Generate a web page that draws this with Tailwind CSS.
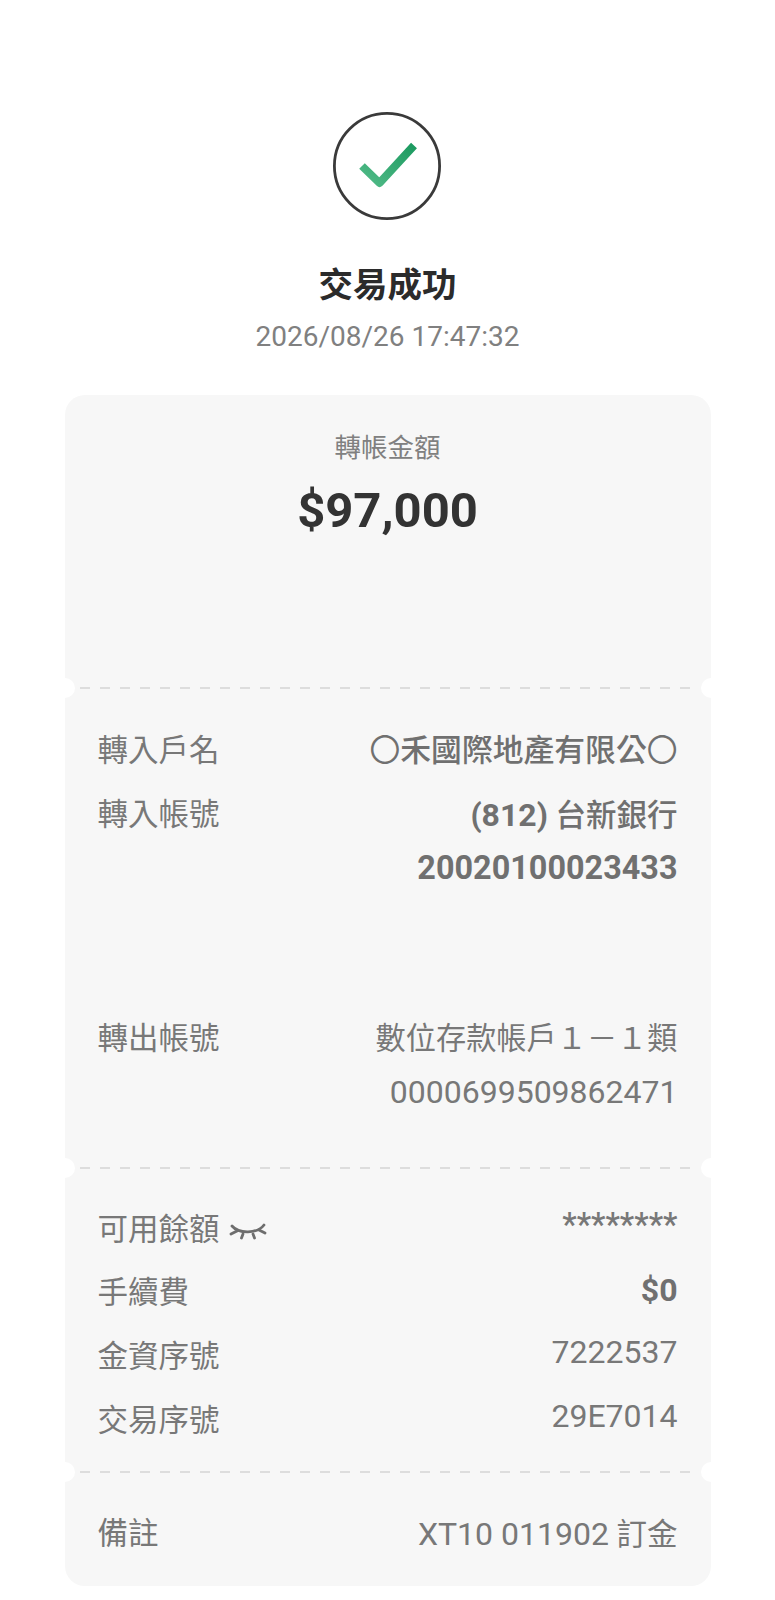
<!DOCTYPE html>
<html lang="zh-Hant">
<head>
    <meta charset="UTF-8">
    <meta name="viewport" content="width=device-width, initial-scale=1.0">
    <title>交易成功</title>
    <script src="https://cdn.jsdelivr.net/npm/@tailwindcss/browser@4"></script>
</head>
<body class="bg-white font-['Roboto','Noto_Sans_CJK_TC',sans-serif]">
    <div class="w-[775px] h-[1600px] overflow-hidden flex flex-col items-center pt-[112px]">
        <!-- success header -->
        <svg class="w-[108px] h-[108px] block -ml-[2px]" viewBox="0 0 108 108" fill="none">
            <defs>
                <linearGradient id="tick" x1="0" y1="1" x2="1" y2="0">
                    <stop offset="0" stop-color="#52bb88"/>
                    <stop offset="1" stop-color="#1c9a60"/>
                </linearGradient>
            </defs>
            <circle cx="54" cy="54" r="52.6" stroke="#3a3a3a" stroke-width="2.800"/>
            <path d="M29 54L46.500 71L81 33.500" stroke="url(#tick)" stroke-width="8" stroke-linejoin="round"/>
        </svg>
        <h1 class="mt-[40px] text-[34.500px] leading-[50px] font-bold text-[#2b2b2b]">交易成功</h1>
        <p class="mt-[2px] text-[28px] leading-[50px] text-[#808080]">2026/08/26 17:47:32</p>

        <!-- receipt card -->
        <div class="mt-[33px] w-[646px] rounded-[20px] overflow-hidden bg-[#f7f7f7] text-[30.500px] text-[#787878]">
            <section class="h-[293px] pt-[35px] text-center">
                <p class="text-[26.500px] leading-[36px] text-[#808080]">轉帳金額</p>
                <p class="mt-[17px] text-[49px] leading-[56px] font-bold text-[#333333]">$97,000</p>
            </section>

            <div class="relative h-0">
                <span class="absolute -left-[10px] -top-[10px] w-[20px] h-[20px] rounded-full bg-white"></span>
                <span class="absolute -right-[10px] -top-[10px] w-[20px] h-[20px] rounded-full bg-white"></span>
                <span class="absolute left-[15px] right-[15px] -top-[1px] h-[2px] bg-[repeating-linear-gradient(90deg,#dddddd_0_10px,transparent_10px_20px)]"></span>
            </div>

            <section class="h-[480px] pt-[36px] px-[33px] leading-[54px]">
                <div class="flex justify-between">
                    <span>轉入戶名</span>
                    <span class="text-[30.800px] font-medium text-[#707070]"><span class="font-normal">〇</span>禾國際地產有限公<span class="font-normal">〇</span></span>
                </div>
                <div class="flex justify-between mt-[10px]">
                    <span>轉入帳號</span>
                    <span class="text-right font-medium text-[#707070]"><span class="text-[32px] font-bold">(812)</span> 台新銀行<span class="block -mt-[2px] text-[32.400px] font-bold">20020100023433</span></span>
                </div>
                <div class="flex justify-between mt-[117px]">
                    <span>轉出帳號</span>
                    <span class="text-right text-[30.200px]">數位存款帳戶１－１類<span class="block -mt-[1px] text-[32px]">0000699509862471</span></span>
                </div>
            </section>

            <div class="relative h-0">
                <span class="absolute -left-[10px] -top-[10px] w-[20px] h-[20px] rounded-full bg-white"></span>
                <span class="absolute -right-[10px] -top-[10px] w-[20px] h-[20px] rounded-full bg-white"></span>
                <span class="absolute left-[15px] right-[15px] -top-[1px] h-[2px] bg-[repeating-linear-gradient(90deg,#dddddd_0_10px,transparent_10px_20px)]"></span>
            </div>

            <section class="h-[304px] pt-[30px] px-[33px]">
                <div class="flex justify-between items-center h-[64px]">
                    <span class="flex items-center">可用餘額
                        <svg class="ml-[9px] mt-[4px] w-[38px] h-[20px]" viewBox="0 0 38 20" fill="none" stroke="#6e6e6e" stroke-width="2.800" stroke-linecap="round">
                            <path d="M3 4C10 12 28 12 35 3"/>
                            <path d="M8 9L2 12M14 12L12.500 16M24 12L25.500 16M30 8L36 11"/>
                        </svg>
                    </span>
                    <span class="pb-[10px] text-[32.500px] font-medium">********</span>
                </div>
                <div class="flex justify-between items-center h-[62px]">
                    <span>手續費</span>
                    <span class="font-bold text-[32px] text-[#707070] pb-[7px]">$0</span>
                </div>
                <div class="flex justify-between items-center h-[65px]">
                    <span>金資序號</span>
                    <span class="pb-[10px] text-[32px]">7222537</span>
                </div>
                <div class="flex justify-between items-center h-[64px]">
                    <span>交易序號</span>
                    <span class="pb-[10px] text-[32px]">29E7014</span>
                </div>
            </section>

            <div class="relative h-0">
                <span class="absolute -left-[10px] -top-[10px] w-[20px] h-[20px] rounded-full bg-white"></span>
                <span class="absolute -right-[10px] -top-[10px] w-[20px] h-[20px] rounded-full bg-white"></span>
                <span class="absolute left-[15px] right-[15px] -top-[1px] h-[2px] bg-[repeating-linear-gradient(90deg,#dddddd_0_10px,transparent_10px_20px)]"></span>
            </div>

            <section class="h-[114px] pt-[35px] px-[33px] leading-[54px] flex justify-between">
                <span>備註</span>
                <span><span class="text-[32px]">XT10 011902</span> 訂金</span>
            </section>
        </div>
    </div>
</body>
</html>
